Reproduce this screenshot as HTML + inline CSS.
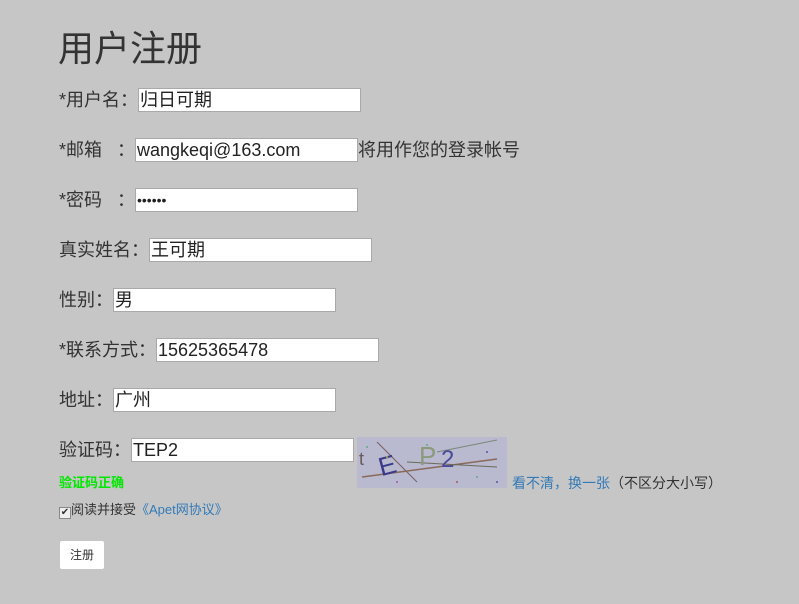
<!DOCTYPE html>
<html><head><meta charset="utf-8"><style>
body{margin:0;width:799px;height:604px;background:#c6c6c6;font-family:"Liberation Sans","Noto Sans CJK SC",sans-serif;color:#333;position:relative;overflow:hidden}
.a{position:absolute;white-space:nowrap}
.l{font-size:18px;line-height:24px}
.i{position:absolute;height:22px;border:1px solid #a9a9a9;background:#fff;font-size:18px;line-height:22px;padding-left:1px;color:#222;box-sizing:content-box}
</style></head><body>
<div class="a" style="left:58px;top:26px;font-size:36px;line-height:46px;color:#333">用户注册</div>

<div class="a l" style="left:59px;top:88px">*用户名：</div>
<div class="i" style="left:138px;top:88px;width:220px">归日可期</div>

<div class="a l" style="left:59px;top:138px">*邮箱&nbsp;&nbsp;&nbsp;：</div>
<div class="i" style="left:135px;top:138px;width:220px">wangkeqi@163.com</div>
<div class="a l" style="left:358px;top:138px">将用作您的登录帐号</div>

<div class="a l" style="left:59px;top:188px">*密码&nbsp;&nbsp;&nbsp;：</div>
<div class="i" style="left:135px;top:188px;width:220px;font-size:14px">••••••</div>

<div class="a l" style="left:59px;top:238px">真实姓名：</div>
<div class="i" style="left:149px;top:238px;width:220px">王可期</div>

<div class="a l" style="left:59px;top:288px">性别：</div>
<div class="i" style="left:113px;top:288px;width:220px">男</div>

<div class="a l" style="left:59px;top:338px">*联系方式：</div>
<div class="i" style="left:156px;top:338px;width:220px">15625365478</div>

<div class="a l" style="left:59px;top:388px">地址：</div>
<div class="i" style="left:113px;top:388px;width:220px">广州</div>

<div class="a l" style="left:59px;top:438px">验证码：</div>
<div class="i" style="left:131px;top:438px;width:220px">TEP2</div>

<svg class="a" style="left:357px;top:437px" width="150" height="51" viewBox="0 0 150 51">
<rect width="150" height="51" fill="#b9b9cf"/>
<line x1="20" y1="5" x2="60" y2="45" stroke="#7a6060" stroke-width="1"/>
<line x1="5" y1="40" x2="140" y2="22" stroke="#8a6a5a" stroke-width="1.5"/>
<line x1="50" y1="25" x2="140" y2="30" stroke="#6a6a5a" stroke-width="1"/>
<line x1="80" y1="15" x2="140" y2="3" stroke="#7a8a7a" stroke-width="1"/>
<text x="22" y="38" font-size="26" fill="#3a3a8a" font-family="Liberation Sans" transform="rotate(-15 28 30)">E</text>
<text x="62" y="28" font-size="26" fill="#8a9a7a" font-family="Liberation Sans">P</text>
<text x="84" y="30" font-size="24" fill="#4a4a9a" font-family="Liberation Sans">2</text>
<text x="2" y="28" font-size="18" fill="#6a5a5a" font-family="Liberation Sans">t</text>
<g fill="#6a8">
<circle cx="10" cy="10" r="1"/><circle cx="40" cy="45" r="1" fill="#a5a"/><circle cx="120" cy="40" r="1"/><circle cx="130" cy="15" r="1" fill="#55a"/><circle cx="100" cy="45" r="1" fill="#a55"/><circle cx="70" cy="8" r="1"/><circle cx="140" cy="45" r="1" fill="#55a"/><circle cx="30" cy="20" r="1" fill="#aa5"/>
</g>
</svg>

<div class="a" style="left:59px;top:475px;font-size:13px;line-height:16px;color:#00e800;font-weight:bold">验证码正确</div>
<div class="a" style="left:512px;top:474px;font-size:14px;line-height:18px;color:#337ab7">看不清，换一张<span style="color:#333">（不区分大小写）</span></div>

<div class="a" style="left:59px;top:502px;font-size:13px;line-height:16px"><span style="display:inline-block;width:10px;height:10px;background:#eee;border:1px solid #888;font-size:10px;line-height:10px;text-align:center;vertical-align:-1px">✔</span>阅读并接受<span style="color:#337ab7">《Apet网协议》</span></div>

<div class="a" style="left:60px;top:541px;width:44px;height:28px;background:#fff;border-radius:2px;font-size:12px;line-height:28px;text-align:center">注册</div>
</body></html>
